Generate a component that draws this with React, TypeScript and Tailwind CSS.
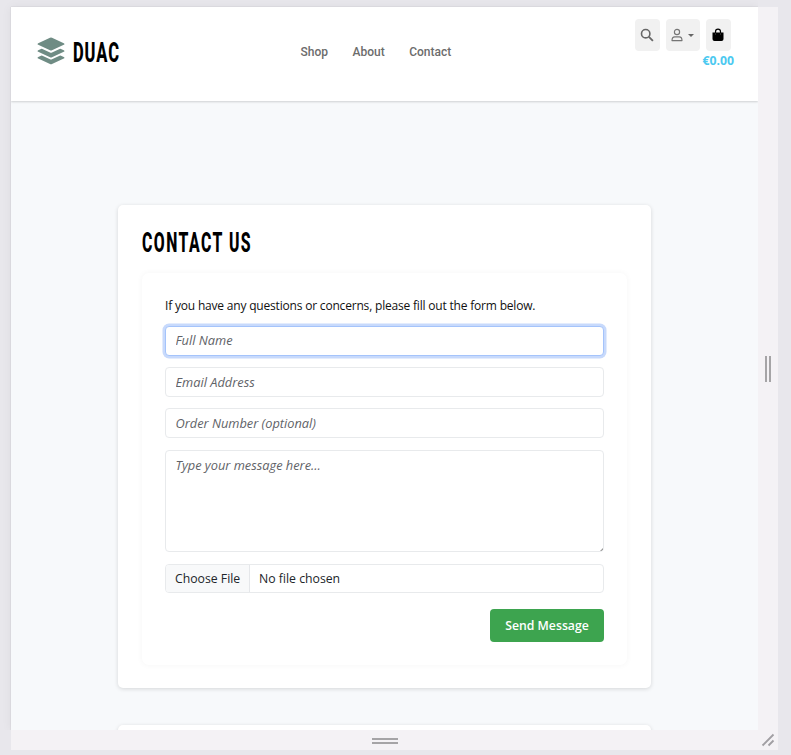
import type { ReactNode } from "react";

function LogoMark() {
  return (
    <svg viewBox="0 0 28 28" className="mb-[2px] size-[28px] text-[#6f8c84]" fill="currentColor">
      <path d="M13 .8q1-.5 2 0l11.8 5.4q1.4.8 0 1.6L15 13.2q-1 .5-2 0L1.200 7.800q-1.400-.8 0-1.600z" />
      <path d="M1.200 13.200 4 11.900q.7-.3 1.400 0l7.600 3.500q1 .5 2 0l7.600-3.500q.7-.3 1.400 0l2.800 1.300q1.400.8 0 1.600L15 20.200q-1 .5-2 0L1.200 14.800q-1.400-.8 0-1.600z" />
      <path d="M1.200 20 4 18.700q.7-.3 1.400 0l7.600 3.500q1 .5 2 0l7.600-3.500q.7-.3 1.400 0l2.800 1.300q1.400.8 0 1.600L15 27q-1 .5-2 0L1.200 21.600q-1.400-.8 0-1.600z" />
    </svg>
  );
}

function SearchIcon() {
  return (
    <svg viewBox="0 0 14 14" className="size-[14px]" fill="none" stroke="#666" strokeWidth="1.600">
      <circle cx="5.700" cy="5.700" r="4.200" />
      <path d="m8.900 8.900 4 4" strokeWidth="1.900" />
    </svg>
  );
}

function UserIcon() {
  return (
    <svg viewBox="0 0 12 14" className="h-[14px] w-[12px]" fill="none" stroke="#757575" strokeWidth="1.150">
      <circle cx="6" cy="4" r="2.600" />
      <path d="M1 12.600c0-2.500 1-3.700 2.800-3.700h4.400c1.800 0 2.800 1.200 2.800 3.700z" strokeLinejoin="round" />
    </svg>
  );
}

function BagIcon() {
  return (
    <svg viewBox="0 0 12 14" className="h-[14px] w-[12px]">
      <path d="M3.500 5V3.700a2.500 2.500 0 0 1 5 0V5" fill="none" stroke="#000" strokeWidth="1.200" />
      <path d="M.5 4.600h11v6.300a2 2 0 0 1-2 2h-7a2 2 0 0 1-2-2z" fill="#000" />
      <path d="M3.500 5.500v1M8.500 5.500v1" stroke="#666" strokeWidth=".8" />
    </svg>
  );
}

function Header() {
  return (
    <header className="relative z-10 flex h-[94px] shrink-0 items-start bg-white pl-[26px] pr-[24px] shadow-[0_1px_2px_rgba(0,0,0,0.16)]">
      <div className="flex h-full w-[263.500px] items-center pb-[5px]">
        <LogoMark />
        <span className="ml-[8px] inline-block w-[47px] origin-left scale-x-[0.61] whitespace-nowrap pt-[2px] font-['Roboto',sans-serif] text-[27px] font-extrabold leading-[32px] tracking-[1.500px] text-black">
          DUAC
        </span>
      </div>
      <nav className="flex h-full items-center gap-[24.500px] pb-[5px] font-['Roboto',sans-serif] text-[12px] font-medium text-[#6c6c6c]">
        <a>Shop</a>
        <a>About</a>
        <a>Contact</a>
      </nav>
      <div className="ml-auto flex flex-col items-end pt-[12px]">
        <div className="mr-[3.500px] flex gap-[6px]">
          <IconButton width="w-[25px]"><SearchIcon /></IconButton>
          <IconButton width="w-[34px]">
            <UserIcon />
            <span className="ml-[5px] border-x-[3px] border-t-[3px] border-x-transparent border-t-[#666]" />
          </IconButton>
          <IconButton width="w-[25px]"><BagIcon /></IconButton>
        </div>
        <span className="mt-[1px] text-[12.250px] font-bold leading-[18px] text-[#4cc9f0]">€0.00</span>
      </div>
    </header>
  );
}

function IconButton({ width, children }: { width: string; children: ReactNode }) {
  return (
    <button className={`flex h-[32px] items-center justify-center rounded-[4px] bg-[#f1f1f1] ${width}`}>{children}</button>
  );
}

const field =
  "block w-full rounded-[4px] border bg-white px-[9.500px] text-[12.800px] italic text-[#212529] outline-none placeholder:text-[#5f6368]";

function ContactForm() {
  return (
    <form className="mt-[15px] flex h-[392px] flex-col rounded-[7px] bg-white px-[23px] pt-[23px] shadow-[0_0_6px_rgba(0,0,0,0.045)]">
      <p className="whitespace-nowrap text-[12px] leading-[20px] tracking-[-0.190px] text-[#111]">
        If you have any questions or concerns, please fill out the form below.
      </p>
      <input
        className={`${field} mt-[10px] h-[30px] border-[#a5c4fb] pb-[2px] shadow-[0_0_0_2.500px_#c8dafc]`}
        placeholder="Full Name"
      />
      <input className={`${field} mt-[11px] h-[30px] border-[#e8eaec]`} placeholder="Email Address" />
      <input className={`${field} mt-[11px] h-[30px] border-[#e8eaec]`} placeholder="Order Number (optional)" />
      <div className="relative mt-[12px] shrink-0">
        <textarea className={`${field} h-[102px] resize-none border-[#e8eaec] pt-[5px] leading-[18px]`} placeholder="Type your message here..." />
        <svg viewBox="0 0 3 3" className="absolute bottom-px right-px size-[3px]" fill="#999">
          <path d="M3 0v1.500L1.500 3H0z" />
        </svg>
      </div>
      <div className="mt-[12px] flex h-[29px] shrink-0 overflow-hidden rounded-[4px] border border-[#e8eaec] text-[12.250px] leading-[27px] text-[#212529]">
        <span className="w-[84px] whitespace-nowrap border-r border-[#e5e7ea] bg-[#f8f9fa] pl-[9px]">Choose File</span>
        <span className="pl-[9px]">No file chosen</span>
      </div>
      <button className="ml-auto mt-[16px] h-[33px] w-[114px] shrink-0 rounded-[4px] bg-[#3da44f] pt-px text-[12.250px] font-semibold text-white">
        Send Message
      </button>
    </form>
  );
}

export default function App() {
  return (
    <div className="h-[755px] w-[791px] overflow-hidden bg-[#e8e7ec] pl-[11px] pt-[7px] font-['Open_Sans',sans-serif]">
      <div className="grid h-[743px] w-[767px] grid-cols-[747px_20px] grid-rows-[723px_20px] bg-[#f4f2f5]">
        <div className="shadow-[0_0_1px_rgba(0,0,0,0.2),0_0_10px_rgba(0,0,0,0.06)] [clip-path:inset(-7px_0_0_-11px)]">
          <div className="flex h-[723px] flex-col overflow-hidden bg-[#f7f9fb]">
            <Header />
            <main className="flex flex-col pl-[107px] pt-[104px]">
              <section className="h-[483px] w-[533px] rounded-[5px] bg-white px-[24px] pt-[20px] shadow-[0_1px_4px_rgba(0,0,0,0.14)]">
                <h1 className="relative top-[2px] inline-block w-[110px] origin-left scale-x-[0.585] whitespace-nowrap font-['Roboto',sans-serif] text-[27px] font-extrabold leading-[33px] tracking-[2.500px] text-black">
                  CONTACT US
                </h1>
                <ContactForm />
              </section>
              <section className="mt-[37px] h-[60px] w-[533px] rounded-[5px] bg-white shadow-[0_1px_4px_rgba(0,0,0,0.14)]" />
            </main>
          </div>
        </div>
        <div className="flex items-center justify-center gap-[2px]">
          <span className="h-[26px] w-[2px] bg-[#a5a4a6]" />
          <span className="h-[26px] w-[2px] bg-[#a5a4a6]" />
        </div>
        <div className="flex flex-col items-center justify-center gap-[2px] pt-[2px]">
          <span className="h-[2px] w-[26px] bg-[#a5a4a6]" />
          <span className="h-[2px] w-[26px] bg-[#a5a4a6]" />
        </div>
        <svg viewBox="0 0 20 20" className="size-[20px]" stroke="#a19fa3" strokeWidth="1.800" fill="none">
          <path d="M4.500 15.500 15.500 4.500M10.500 15.500l5-5" />
        </svg>
      </div>
    </div>
  );
}
